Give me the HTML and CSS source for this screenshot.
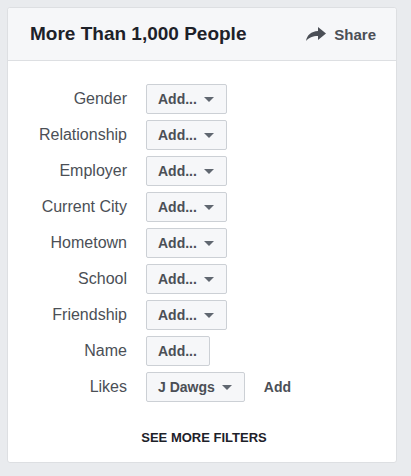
FILE: index.html
```html
<!DOCTYPE html>
<html>
<head>
<meta charset="utf-8">
<link rel="stylesheet" href="styles.css">
</head>
<body>
<div class="card">
  <div class="card-header">
    <h2 class="title">More Than 1,000 People</h2>
    <a class="share"><svg class="share-icon" width="20" height="14" viewBox="0 0 20 14"><path d="M12 0 L20 6.5 L12 13 L12 9 C6.5 9 3 10.5 0 14 C1 8 5 4.5 12 4 Z" fill="#4b4f56"/></svg>Share</a>
  </div>
  <div class="filters">
    <div class="row"><span class="label">Gender</span><span class="btn">Add...<i class="caret"></i></span></div>
    <div class="row"><span class="label">Relationship</span><span class="btn">Add...<i class="caret"></i></span></div>
    <div class="row"><span class="label">Employer</span><span class="btn">Add...<i class="caret"></i></span></div>
    <div class="row"><span class="label">Current City</span><span class="btn">Add...<i class="caret"></i></span></div>
    <div class="row"><span class="label">Hometown</span><span class="btn">Add...<i class="caret"></i></span></div>
    <div class="row"><span class="label">School</span><span class="btn">Add...<i class="caret"></i></span></div>
    <div class="row"><span class="label">Friendship</span><span class="btn">Add...<i class="caret"></i></span></div>
    <div class="row"><span class="label">Name</span><span class="btn">Add...</span></div>
    <div class="row"><span class="label">Likes</span><span class="btn">J Dawgs<i class="caret"></i></span><a class="add-link">Add</a></div>
  </div>
  <div class="more">SEE MORE FILTERS</div>
</div>
</body>
</html>
```
FILE: styles.css
```css
html, body {
  margin: 0;
  padding: 0;
  background: #e9ebee;
}
body {
  padding: 7px 14px 0 7px;
  font-family: "Liberation Sans", Arial, sans-serif;
  color: #4b4f56;
}
.card {
  width: 388px;
  height: 454px;
  background: #fff;
  border: 1px solid #dddfe2;
  border-radius: 3px;
  display: flex;
  flex-direction: column;
}
.card-header {
  height: 52px;
  background: #f6f7f9;
  border-bottom: 1px solid #dddfe2;
  border-radius: 3px 3px 0 0;
  display: flex;
  align-items: center;
  justify-content: space-between;
  padding: 0 20px 0 22px;
}
.title {
  margin: 0;
  font-size: 19px;
  font-weight: bold;
  color: #1d2129;
}
.share {
  display: flex;
  align-items: center;
  gap: 8px;
  font-size: 15px;
  font-weight: bold;
  color: #4b4f56;
}
.share-icon {
  display: block;
}
.filters {
  display: flex;
  flex-direction: column;
  gap: 6px;
  padding-top: 23px;
}
.row {
  display: flex;
  align-items: center;
  height: 30px;
}
.label {
  width: 119px;
  text-align: right;
  margin-right: 19px;
  font-size: 16px;
  color: #4b4f56;
}
.btn {
  box-sizing: border-box;
  height: 30px;
  display: flex;
  align-items: center;
  padding: 0 12px 0 11px;
  border: 1px solid #ccd0d5;
  border-radius: 2px;
  background: #f6f7f9;
  font-size: 14px;
  font-weight: bold;
  color: #4b4f56;
}
.caret {
  display: inline-block;
  width: 0;
  height: 0;
  margin-left: 7px;
  margin-top: 1px;
  border-left: 5px solid transparent;
  border-right: 5px solid transparent;
  border-top: 5px solid #606770;
}
.add-link {
  margin-left: 19px;
  font-size: 14px;
  font-weight: bold;
  color: #4b4f56;
}
.more {
  margin-top: 28px;
  text-align: center;
  font-size: 13px;
  font-weight: bold;
  color: #1d2129;
  padding-left: 4px;
}
```
